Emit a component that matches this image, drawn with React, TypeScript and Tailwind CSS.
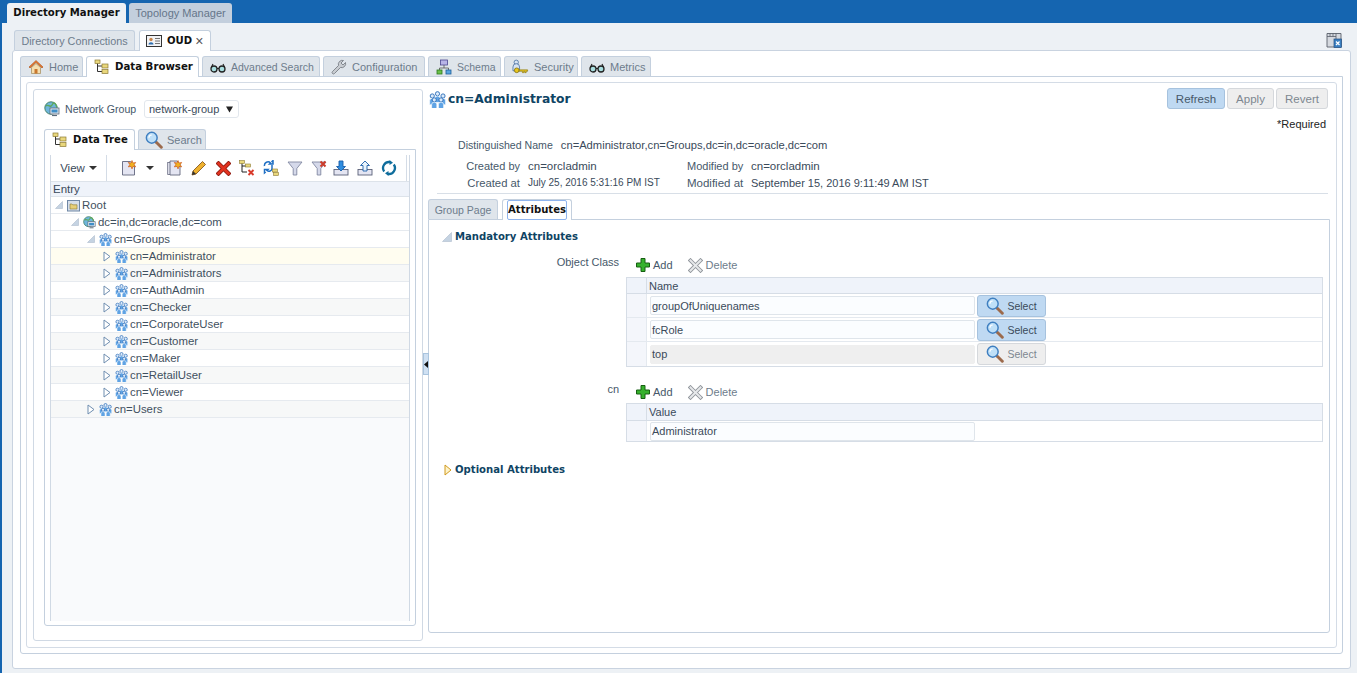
import React from "react";

const Home = () => (
  <svg width="16" height="16" viewBox="0 0 16 16"><path d="M1 8 8 1.500 15 8l-1 1L8 3.500 2 9z" fill="#e8772e" stroke="#a9501a" strokeWidth=".6"/><path d="M3.500 8.500 8 4.500l4.500 4v6h-9z" fill="#f6dfb0" stroke="#a08a5a" strokeWidth=".7"/><rect x="6.500" y="10" width="3" height="4.500" fill="#c8782f"/></svg>
);
const Tree = () => (
  <svg width="16" height="16" viewBox="0 0 16 16"><path d="M3.500 4v8.500H8M3.500 7H8" fill="none" stroke="#333" strokeWidth="1"/><rect x="1" y="1" width="5" height="3.500" fill="#e9d77c" stroke="#8c7a35" strokeWidth=".7"/><rect x="8" y="5" width="6" height="4" fill="#e9d77c" stroke="#8c7a35" strokeWidth=".7"/><rect x="8" y="10.500" width="6" height="4" fill="#e9d77c" stroke="#8c7a35" strokeWidth=".7"/></svg>
);
const Glasses = () => (
  <svg width="16" height="16" viewBox="0 0 16 16"><circle cx="4" cy="10" r="3" fill="#a9dfe0" stroke="#222" strokeWidth="1.300"/><circle cx="12" cy="10" r="3" fill="#a9dfe0" stroke="#222" strokeWidth="1.300"/><path d="M7 9.500h2M1.500 8 3 5M14.500 8 13 5" fill="none" stroke="#222" strokeWidth="1.100"/></svg>
);
const Wrench = () => (
  <svg width="16" height="16" viewBox="0 0 16 16"><path d="M14.500 3.500 12 6 10 4l2.500-2.500a4 4 0 0 0-5 5L1.500 12.500a1.400 1.400 0 0 0 2 2l6-6a4 4 0 0 0 5-5z" fill="#c8ccd1" stroke="#6e747b" strokeWidth=".8"/></svg>
);
const Schema = () => (
  <svg width="16" height="16" viewBox="0 0 16 16"><rect x="4.500" y="1" width="7" height="5" fill="#b8b4e8" stroke="#4c4690" strokeWidth=".8"/><path d="M8 6v3M3.500 11V9h9v2" fill="none" stroke="#555" strokeWidth=".8"/><rect x="1" y="11" width="5" height="4" fill="#6cc04a" stroke="#2d7a1e" strokeWidth=".8"/><rect x="10" y="11" width="5" height="4" fill="#5aa5e0" stroke="#1d5f9a" strokeWidth=".8"/></svg>
);
const Security = () => (
  <svg width="17" height="16" viewBox="0 0 18 16"><circle cx="4.500" cy="3" r="2.300" fill="#d6e3f4" stroke="#41699c" strokeWidth=".8"/><path d="M1 12V8a3.500 3.500 0 0 1 7 0v4z" fill="#d6e3f4" stroke="#41699c" strokeWidth=".8"/><circle cx="5" cy="11.500" r="2.500" fill="#e8c61e" stroke="#7c6a08" strokeWidth=".8"/><path d="M7.500 11h9v1.500h-1.500v1.500h-1.500v-1.500h-1v1.500H11v-1.500H7.500z" fill="#e8c61e" stroke="#7c6a08" strokeWidth=".6"/></svg>
);
const Search = ({ s = 16 }: { s?: number }) => (
  <svg width={s} height={s} viewBox="0 0 16 16"><path d="M10 10 14.500 14.500" stroke="#9c6a4c" strokeWidth="2.600" strokeLinecap="round"/><circle cx="6" cy="6" r="4.800" fill="#bfe0f8" stroke="#3f7fc0" strokeWidth="1.300"/><path d="M3.500 6A2.500 2.500 0 0 1 6 3.500" fill="none" stroke="#fff" strokeWidth="1"/></svg>
);
const Globe = ({ s = 16 }: { s?: number }) => (
  <svg width={s} height={s} viewBox="0 0 16 16"><circle cx="7" cy="7" r="6.200" fill="#6fb6dc" stroke="#3a7a5c" strokeWidth=".9"/><path d="M2 5c2-2 3 1 5 0s1-3 3-3 2 3 3 4" fill="none" stroke="#5fa85a" strokeWidth="1.400"/><rect x="6" y="7" width="9" height="6" fill="#dfe6ee" stroke="#5a6a7a" strokeWidth=".8"/><rect x="7.500" y="8.500" width="6" height="3" fill="#3f8ec8"/><path d="M8 14.500h5" stroke="#5a6a7a" strokeWidth="1.200"/></svg>
);
const Folder = () => (
  <svg width="13" height="13" viewBox="0 0 13 13"><rect x=".5" y="1.500" width="12" height="10.500" fill="#d5deea" stroke="#6f87a5"/><path d="M3 5h2l.8.800H10V10H3z" fill="#e6cf78" stroke="#8c7a35" strokeWidth=".6"/></svg>
);
const Person = ({ x, y }: { x: number; y: number }) => (
  <g transform={`translate(${x} ${y})`}>
    <circle cx="2.200" cy="1.800" r="1.600" fill="#dbeafa" stroke="#2a6cb8" strokeWidth=".7"/>
    <path d="M.2 8.500V5.500a2 2 0 0 1 4 0v3z" fill="#5fa3e4" stroke="#fff" strokeWidth=".5"/>
  </g>
);
const Group = ({ s = 13 }: { s?: number }) => (
  <svg width={s} height={s} viewBox="0 0 13 13">
    <Person x={0.300} y={2} />
    <Person x={8.500} y={2} />
    <Person x={4.300} y={0.300} />
    <Person x={1.800} y={5} />
    <Person x={7} y={5} />
  </svg>
);
const TriOpen = () => (
  <svg width="8" height="8" viewBox="0 0 8 8"><path d="M7.500.5v7H.5z" fill="#c5d3e2" stroke="#aebccc" strokeWidth=".6"/></svg>
);
const TriClosed = () => (
  <svg width="8" height="11" viewBox="0 0 8 11"><path d="M1 1l6 4.500L1 10z" fill="#fff" stroke="#6f8eb0" strokeWidth="1"/></svg>
);

const PageStar = ({ stack = false }: { stack?: boolean }) => (
  <svg width="16" height="16" viewBox="0 0 16 16">
    {stack && <rect x=".7" y="2.500" width="9" height="12" fill="#e8e9f3" stroke="#666a80" strokeWidth=".8"/>}
    <path d={stack ? "M3 1h7l3 3v11H3z" : "M1.500 1.500h8l4 4v9.500h-12z"} fill="#e4e5f2" stroke="#62667e" strokeWidth=".9"/>
    <path d="M11 .5l1 2.500 2.700-.6-1.500 2.300 1.500 2.200-2.700-.5-1 2.500-1-2.500-2.700.5 1.500-2.200-1.500-2.300 2.700.6z" fill="#f0b020" stroke="#c64a1a" strokeWidth=".6"/>
  </svg>
);
const Pencil = () => (
  <svg width="16" height="16" viewBox="0 0 16 16"><path d="M2 11 11.500 1.500l3 3L5 14l-4 1z" fill="#eeb12f" stroke="#7a4a12" strokeWidth=".8"/><path d="M1 15l1-4 3 3z" fill="#333"/></svg>
);
const RedX = () => (
  <svg width="15" height="15" viewBox="0 0 15 15"><path d="M2.500 2.500l10 10M12.500 2.500l-10 10" stroke="#8e1b12" strokeWidth="4.200" strokeLinecap="square"/><path d="M2.500 2.500l10 10M12.500 2.500l-10 10" stroke="#e2331f" strokeWidth="2.600" strokeLinecap="square"/></svg>
);
const TreeDel = () => (
  <svg width="16" height="16" viewBox="0 0 16 16"><path d="M3 3v9h5M3 6h5" fill="none" stroke="#222" strokeWidth="1"/><rect x=".5" y=".5" width="5" height="3" fill="#e9d77c" stroke="#8c7a35" strokeWidth=".6"/><rect x="6.500" y="4" width="5" height="3" fill="#e9d77c" stroke="#8c7a35" strokeWidth=".6"/><path d="M9.500 10l5 5M14.500 10l-5 5" stroke="#d8392a" strokeWidth="1.900"/></svg>
);
const TreeSync = () => (
  <svg width="16" height="16" viewBox="0 0 16 16"><path d="M1.500 6a3.500 3.500 0 0 1 6-3l-1 1h3.500V.5L8.500 2" fill="none" stroke="#1f6fc4" strokeWidth="1.500"/><path d="M9 5v3.500a3 3 0 0 1-5 2l1-1H1.500V13l1.200-1" fill="none" stroke="#1f6fc4" strokeWidth="1.500"/><rect x="9.500" y="9" width="5" height="3" fill="#e9d77c" stroke="#8c7a35" strokeWidth=".6"/><rect x="10.500" y="12.500" width="5" height="3" fill="#e9d77c" stroke="#8c7a35" strokeWidth=".6"/></svg>
);
const Funnel = ({ x = false }: { x?: boolean }) => (
  <svg width="16" height="16" viewBox="0 0 16 16"><path d="M1 2h14L9.800 8.500v6.500H6.200V8.500z" fill="#d5d9ea" stroke="#8188a2" strokeWidth=".9"/>{x && <path d="M9.500 1.500l5 5M14.500 1.500l-5 5" stroke="#cc3b2a" strokeWidth="2"/>}</svg>
);
const Tray = ({ up = false }: { up?: boolean }) => (
  <svg width="16" height="16" viewBox="0 0 16 16"><rect x="1" y="9.500" width="14" height="5.500" fill="#e4e5f2" stroke="#5a6078" strokeWidth=".9"/><path d={up ? "M8 1l4.500 4.500H10V11H6V5.500H3.500z" : "M6 1h4v5.500h2.500L8 11 3.500 6.500H6z"} fill={up ? "#e8f3fc" : "#2f8de0"} stroke="#1c5fa8" strokeWidth=".9"/></svg>
);
const Refresh = () => (
  <svg width="16" height="16" viewBox="0 0 16 16"><path d="M3.200 11.500A6 6 0 0 1 9.500 2.200M12.800 4.500A6 6 0 0 1 6.500 13.800" fill="none" stroke="#0f6d9c" strokeWidth="2.300"/><path d="M8.500 0 12 2.800 8.500 5zM7.500 16 4 13.200 7.500 11z" fill="#0f6d9c"/></svg>
);
const Card = () => (
  <svg width="16" height="12" viewBox="0 0 16 12"><rect x=".5" y=".5" width="15" height="11" fill="#f2f3f5" stroke="#333"/><circle cx="5" cy="4.500" r="1.700" fill="#c9864a"/><path d="M2.500 9.500c0-3 5-3 5 0z" fill="#2f6fb0"/><path d="M9 3.500h5M9 6h5M9 8.500h5" stroke="#666" strokeWidth=".9"/></svg>
);
const CloseWin = () => (
  <svg width="16" height="16" viewBox="0 0 16 16"><path d="M1 1.500h14V15H1z" fill="#d5d9df" stroke="#59606b" strokeWidth=".9"/><path d="M1 4.500h9M4 1.500v3M7 1.500v3M10 1.500V15" stroke="#59606b" strokeWidth=".8" fill="none"/><rect x="8" y="7" width="7.500" height="8.500" fill="#3a7fc0" stroke="#244f80" strokeWidth=".7"/><path d="M10 9.500l3.500 3.500M13.500 9.500 10 13" stroke="#fff" strokeWidth="1.300"/></svg>
);
const Plus = () => (
  <svg width="16" height="16" viewBox="0 0 16 16"><path d="M6 1.500h4v4.500h4.500v4H10v4.500H6V10H1.500V6H6z" fill="#36b12d" stroke="#175f12" strokeWidth="1"/></svg>
);
const GrayX = () => (
  <svg width="15" height="15" viewBox="0 0 15 15"><path d="M2.500 2.500l10 10M12.500 2.500l-10 10" stroke="#8f949a" strokeWidth="3.800" strokeLinecap="square"/><path d="M2.500 2.500l10 10M12.500 2.500l-10 10" stroke="#e6e8ea" strokeWidth="2" strokeLinecap="square"/></svg>
);

const tabBase = "flex items-center rounded-t-[3px] border border-b-0 border-[#c4d0de]";
const off = "bg-[#dfe5eb] text-[#6d7c8c]";
const on = "bg-white text-[#111] font-bold relative z-10 text-[10.200px] [font-family:'DejaVu_Sans',sans-serif]";
const bold = "font-bold text-[10.100px] [font-family:'DejaVu_Sans',sans-serif]";

function MainTab({ icon, label, active, cls }: { icon: React.ReactNode; label: string; active?: boolean; cls: string }) {
  return (
    <div className={`${tabBase} ${active ? on : off} ${cls} h-[20px] gap-[5px] justify-start pl-[7px]`}>
      {icon}
      <span className="whitespace-nowrap">{label}</span>
    </div>
  );
}

const rows = [
  { label: "Root", pl: "pl-[4px]", tri: "open", ic: "folder", bg: "bg-white" },
  { label: "dc=in,dc=oracle,dc=com", pl: "pl-[20px]", tri: "open", ic: "globe", bg: "bg-white" },
  { label: "cn=Groups", pl: "pl-[36px]", tri: "open", ic: "group", bg: "bg-white" },
  { label: "cn=Administrator", pl: "pl-[52px]", tri: "closed", ic: "group", bg: "bg-[#fffdf0]" },
  { label: "cn=Administrators", pl: "pl-[52px]", tri: "closed", ic: "group", bg: "bg-[#f7f8f8]" },
  { label: "cn=AuthAdmin", pl: "pl-[52px]", tri: "closed", ic: "group", bg: "bg-white" },
  { label: "cn=Checker", pl: "pl-[52px]", tri: "closed", ic: "group", bg: "bg-[#f7f8f8]" },
  { label: "cn=CorporateUser", pl: "pl-[52px]", tri: "closed", ic: "group", bg: "bg-white" },
  { label: "cn=Customer", pl: "pl-[52px]", tri: "closed", ic: "group", bg: "bg-[#f7f8f8]" },
  { label: "cn=Maker", pl: "pl-[52px]", tri: "closed", ic: "group", bg: "bg-white" },
  { label: "cn=RetailUser", pl: "pl-[52px]", tri: "closed", ic: "group", bg: "bg-[#f7f8f8]" },
  { label: "cn=Viewer", pl: "pl-[52px]", tri: "closed", ic: "group", bg: "bg-white" },
  { label: "cn=Users", pl: "pl-[36px]", tri: "closed", ic: "group", bg: "bg-[#f7f8f8]" },
];

function SelectBtn({ disabled }: { disabled?: boolean }) {
  return (
    <div className={`ml-[2px] flex h-[22px] w-[69px] items-center justify-center gap-[3px] rounded-[3px] border ${disabled ? "border-[#d5d8dc] bg-[#eeeeee] text-[#7d8790]" : "border-[#a6c2de] bg-[#bfd9f2] text-[#3a4a5a]"}`}>
      <Search s={18} />
      <span className="text-[10.500px]">Select</span>
    </div>
  );
}

function AddDelete() {
  return (
    <div className="flex h-[16px] items-center pl-[9px]">
      <Plus />
      <span className="ml-[2px] text-[#46586a]">Add</span>
      <span className="ml-[15px]"><GrayX /></span>
      <span className="ml-[3px] text-[#6d7c8c]">Delete</span>
    </div>
  );
}

function ValueRow({ value, disabled, last, tall }: { value: string; disabled?: boolean; last?: boolean; tall?: boolean }) {
  return (
    <div className={`flex ${tall ? "h-[20px]" : "h-[24px]"} ${last ? "" : "border-b border-[#e4e9ef]"}`}>
      <div className="w-[20px] shrink-0 border-r border-[#e4e9ef] bg-[#f4f6fb]" />
      <div className="flex items-center pl-[3px]">
        <div className={`flex h-[19px] w-[325px] items-center rounded-[2px] border pl-[1px] ${disabled ? "border-[#efefef] bg-[#efefef]" : "border-[#dfe5eb] bg-[#fbfdff]"} text-[#3a4a5a]`}>{value}</div>
        {!tall && <SelectBtn disabled={disabled} />}
      </div>
    </div>
  );
}

export default function App() {
  return (
    <div className="flex h-screen min-w-[1357px] flex-col overflow-hidden bg-[#1565b0] pl-[2px] text-[11px] leading-[14px] text-[#46586a] [font-family:'Liberation_Sans',sans-serif]">
      <div className="flex h-[23px] shrink-0 gap-[3px] pl-[5px] pt-[3px]">
        <div className={`flex w-[119px] items-center justify-center rounded-t-[3px] bg-[#edf1f5] text-[#111] ${bold}`}>Directory Manager</div>
        <div className="flex w-[103px] items-center justify-center rounded-t-[3px] bg-[#c3cfdd] text-[#66768a]">Topology Manager</div>
      </div>

      <div className="flex min-h-0 flex-1 flex-col bg-[#edf1f5] pb-[4px] pl-[10px] pr-[6px] pt-[7px]">
        <div className="flex h-[20px] shrink-0 items-end gap-[4px] pl-[2px]">
          <div className={`${tabBase} ${off} h-[20px] w-[121px] justify-center text-[10.800px]`}>Directory Connections</div>
          <div className={`${tabBase} relative z-10 h-[21px] w-[72px] translate-y-[1px] items-center gap-[5px] bg-white pl-[6px] text-[#111]`}>
            <Card />
            <span className={bold}>OUD</span>
            <span className="-ml-[2px] text-[14px] font-normal text-[#555]">×</span>
          </div>
          <div className="ml-auto mr-[9px] self-start pt-[2px]"><CloseWin /></div>
        </div>

        <div className="flex min-h-0 flex-1 flex-col rounded-[3px] border border-[#c9d3e0] bg-white pb-[14px] pl-[7px] pr-[7px] pt-[5px]">
          <div className="relative z-10 flex h-[20px] shrink-0 gap-[3px]">
            <MainTab icon={<Home />} label="Home" cls="w-[63px]" />
            <MainTab icon={<Tree />} label="Data Browser" active cls="w-[113px] h-[21px]" />
            <MainTab icon={<Glasses />} label="Advanced Search" cls="w-[118px] text-[10.500px]" />
            <MainTab icon={<Wrench />} label="Configuration" cls="w-[102px]" />
            <MainTab icon={<Schema />} label="Schema" cls="w-[73px] text-[10.500px]" />
            <MainTab icon={<Security />} label="Security" cls="w-[74px]" />
            <MainTab icon={<Glasses />} label="Metrics" cls="w-[70px]" />
          </div>

          <div className="flex min-h-0 flex-1 flex-col rounded-b-[3px] border border-[#c4d0de] p-[5px]">
            <div className="flex min-h-0 flex-1 rounded-[3px] border border-[#d4dce6] p-[6px]">
              {/* left panel */}
              <div className="flex w-[390px] shrink-0 flex-col rounded-[3px] border border-[#d0d9e4] pb-[14px] pl-[10px] pr-[6px] pt-[10px]">
                <div className="flex h-[18px] items-center">
                  <Globe />
                  <span className="ml-[5px] w-[72px] whitespace-nowrap text-[10.600px]">Network Group</span>
                  <div className="ml-[7px] flex h-[18px] w-[95px] items-center rounded-[3px] border border-[#e2e7ed] pl-[4px] text-[#3a4a5a]">
                    network-group
                    <svg className="ml-[7px]" width="7" height="7" viewBox="0 0 8 7"><path d="M0 0h8L4 7z" fill="#222"/></svg>
                  </div>
                </div>
                <div className="mt-[11px] flex h-[20px] shrink-0 gap-[3px]">
                  <div className={`${tabBase} relative z-10 h-[21px] w-[91px] justify-start gap-[5px] bg-white pl-[7px] text-[#111]`}><Tree /><span className={bold}>Data Tree</span></div>
                  <div className={`${tabBase} ${off} h-[20px] w-[68px] justify-start gap-[4px] pl-[6px]`}><Search s={18} /><span>Search</span></div>
                </div>
                <div className="flex min-h-0 flex-1 flex-col rounded-b-[3px] border border-[#c4d0de] px-[5px] pb-[4px] pt-[5px]">
                  <div className="flex min-h-0 flex-1 flex-col border-x border-[#d0d9e4] bg-[#f9fafc]">
                    <div className="flex h-[26px] shrink-0 items-center bg-white">
                      <div className="flex h-[26px] w-[56px] items-center justify-center gap-[4px] border-r border-[#d4dce6] text-[11.500px] text-[#3a4a5a]">
                        View
                        <svg width="8" height="4" viewBox="0 0 8 4"><path d="M0 0h8L4 4z" fill="#333"/></svg>
                      </div>
                      <div className="ml-[14px] flex items-center">
                        <PageStar />
                        <svg className="ml-[9px]" width="8" height="4" viewBox="0 0 8 4"><path d="M0 0h8L4 4z" fill="#333"/></svg>
                        <span className="ml-[13px]"><PageStar stack /></span>
                        <span className="ml-[8px]"><Pencil /></span>
                        <span className="ml-[9px]"><RedX /></span>
                        <span className="ml-[8px]"><TreeDel /></span>
                        <span className="ml-[8px]"><TreeSync /></span>
                        <span className="ml-[8px]"><Funnel /></span>
                        <span className="ml-[8px]"><Funnel x /></span>
                        <span className="ml-[6px]"><Tray /></span>
                        <span className="ml-[8px]"><Tray up /></span>
                        <span className="ml-[8px]"><Refresh /></span>
                        <span className="ml-[9px] h-[26px] w-px bg-[#d4dce6]" />
                      </div>
                    </div>
                    <div className="flex h-[16px] shrink-0 items-center border-y border-[#dde3ea] bg-[#eff3fa] pl-[2px] text-[11.500px] text-[#3a4a5a]">Entry</div>
                    {rows.map((r) => (
                      <div key={r.label} className={`flex h-[17px] shrink-0 items-center border-b border-[#e6eaef] ${r.bg} ${r.pl}`}>
                        <span className="flex w-[12px] justify-start">{r.tri === "open" ? <TriOpen /> : <TriClosed />}</span>
                        <span className="flex w-[13px] items-center">
                          {r.ic === "folder" ? <Folder /> : r.ic === "globe" ? <Globe s={13} /> : <Group />}
                        </span>
                        <span className="ml-[2px] text-[11.400px] text-[#3f5060]">{r.label}</span>
                      </div>
                    ))}
                  </div>
                </div>
              </div>

              {/* splitter */}
              <div className="relative w-[5px] shrink-0">
                <div className="absolute left-0 top-[264px] flex h-[22px] w-[6px] items-center justify-center border border-[#a9c4de] bg-[#cfe0f2]">
                  <svg width="4" height="7" viewBox="0 0 4 7"><path d="M4 0v7L0 3.500z" fill="#111"/></svg>
                </div>
              </div>

              {/* right panel */}
              <div className="flex min-w-0 flex-1 flex-col pb-[8px]">
                <div className="-mt-[1px] flex h-[21px] shrink-0 items-center justify-between pr-[2px]">
                  <div className="flex items-center gap-[2px] pl-[1px] pt-[1px]">
                    <Group s={17} />
                    <span className="text-[12.300px] font-bold text-[#0f4464] [font-family:'DejaVu_Sans',sans-serif]">cn=Administrator</span>
                  </div>
                  <div className="flex h-[21px] gap-[2px] text-[11.500px] text-[#46586a]">
                    <div className="flex w-[58px] items-center justify-center rounded-[3px] border border-[#a6c2de] bg-[#bfd9f2]">Refresh</div>
                    <div className="flex w-[47px] items-center justify-center rounded-[3px] border border-[#d5d8dc] bg-[#eeeeee] text-[#7d8790]">Apply</div>
                    <div className="flex w-[52px] items-center justify-center rounded-[3px] border border-[#d5d8dc] bg-[#eeeeee] text-[#7d8790]">Revert</div>
                  </div>
                </div>
                <div className="mt-[8px] pr-[4px] text-right text-[#222]">*Required</div>
                <div className="mt-[7px] flex h-[14px] pl-[30px] whitespace-nowrap">
                  <span className="text-[10.600px]">Distinguished Name</span>
                  <span className="ml-[8px] text-[11.200px] text-[#3a4a5a]">cn=Administrator,cn=Groups,dc=in,dc=oracle,dc=com</span>
                </div>
                <div className="mt-[7px] grid grid-cols-[92px_151px_56px_1fr] gap-x-[8px] gap-y-[3px] whitespace-nowrap">
                  <span className="text-right">Created by</span>
                  <span className="text-[11.500px] text-[#3a4a5a]">cn=orcladmin</span>
                  <span className="text-right">Modified by</span>
                  <span className="text-[11.500px] text-[#3a4a5a]">cn=orcladmin</span>
                  <span className="text-right text-[11.300px]">Created at</span>
                  <span className="text-[10px] text-[#3a4a5a]">July 25, 2016 5:31:16 PM IST</span>
                  <span className="text-right text-[11.500px]">Modified at</span>
                  <span className="text-[#3a4a5a]">September 15, 2016 9:11:49 AM IST</span>
                </div>
                <div className="ml-[9px] mr-[2px] mt-[3px] h-px shrink-0 bg-[#d8dfe7]" />
                <div className="relative z-10 mt-[5px] flex h-[20px] shrink-0 gap-[4px]">
                  <div className={`${tabBase} ${off} h-[20px] w-[70px] justify-center text-[10.500px]`}>Group Page</div>
                  <div className={`${tabBase} h-[21px] w-[70px] justify-center bg-white text-[#111]`}>
                    <span className={`rounded-[2px] border border-[#8fb4ee] py-[2px] ${bold}`}>Attributes</span>
                  </div>
                </div>
                <div className="flex min-h-0 flex-1 flex-col rounded-b-[3px] border border-[#c4d0de] pl-[13px] pr-[6px] pt-[9px]">
                  <div className="flex h-[16px] items-center gap-[3px] text-[#0f4464]">
                    <svg width="10" height="10" viewBox="0 0 10 10"><path d="M9.500.5v9H.5z" fill="#c5d3e2" stroke="#aebccc" strokeWidth=".6"/></svg>
                    <span className={bold}>Mandatory Attributes</span>
                  </div>
                  <div className="mt-[12px] flex">
                    <div className="-mt-[2px] w-[177px] text-right">Object Class</div>
                    <div className="ml-[7px] flex flex-1 flex-col">
                      <AddDelete />
                      <div className="mt-[4px] border border-[#d6dde6]">
                        <div className="flex h-[16px] border-b border-[#d6dde6] bg-[#eff3fa] text-[#3a4a5a]">
                          <div className="w-[20px] shrink-0 border-r border-[#d6dde6]" />
                          <div className="flex items-center pl-[2px]">Name</div>
                        </div>
                        <ValueRow value="groupOfUniquenames" />
                        <ValueRow value="fcRole" />
                        <ValueRow value="top" disabled last />
                      </div>
                    </div>
                  </div>
                  <div className="mt-[17px] flex">
                    <div className="-mt-[2px] w-[177px] text-right">cn</div>
                    <div className="ml-[7px] flex flex-1 flex-col">
                      <AddDelete />
                      <div className="mt-[3px] border border-[#d6dde6]">
                        <div className="flex h-[17px] border-b border-[#d6dde6] bg-[#eff3fa] text-[#3a4a5a]">
                          <div className="w-[20px] shrink-0 border-r border-[#d6dde6]" />
                          <div className="flex items-center pl-[2px]">Value</div>
                        </div>
                        <ValueRow value="Administrator" last tall />
                      </div>
                    </div>
                  </div>
                  <div className="mt-[20px] flex h-[16px] items-center gap-[3px] pl-[2px] text-[#0f4464]">
                    <svg width="8" height="12" viewBox="0 0 8 12"><path d="M1 1l6 5-6 5z" fill="#fff3c8" stroke="#d09a20" strokeWidth="1"/></svg>
                    <span className={bold}>Optional Attributes</span>
                  </div>
                </div>
              </div>
            </div>
          </div>
        </div>
      </div>
    </div>
  );
}
